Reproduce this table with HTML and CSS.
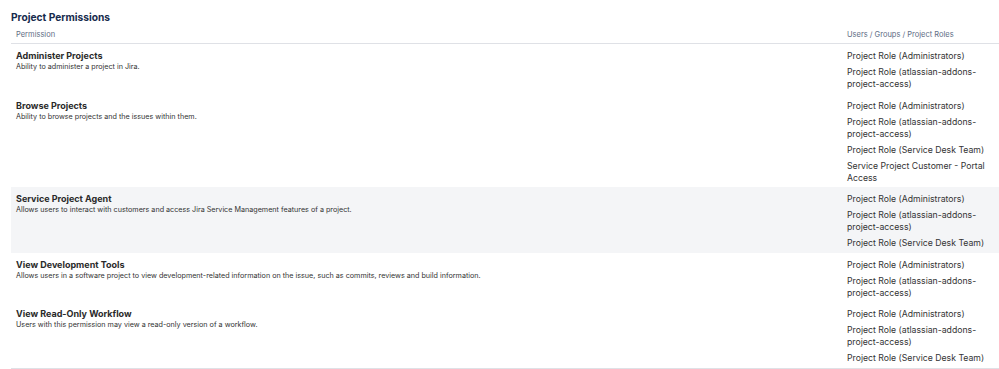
FILE: index.html
```html
<!DOCTYPE html>
<html>
<head>
<meta charset="utf-8">
<link rel="stylesheet" href="styles.css">
</head>
<body>
<div class="page">
  <h2 class="title">Project Permissions</h2>
  <div class="perm-table">
    <div class="row head">
      <div class="cell">Permission</div>
      <div class="cell">Users / Groups / Project Roles</div>
    </div>
    <div class="row">
      <div class="cell">
        <div class="name">Administer Projects</div>
        <div class="desc">Ability to administer a project in Jira.</div>
      </div>
      <div class="cell">
        <div class="item">Project Role (Administrators)</div>
        <div class="item">Project Role (atlassian-addons-project-access)</div>
      </div>
    </div>
    <div class="row">
      <div class="cell">
        <div class="name">Browse Projects</div>
        <div class="desc">Ability to browse projects and the issues within them.</div>
      </div>
      <div class="cell">
        <div class="item">Project Role (Administrators)</div>
        <div class="item">Project Role (atlassian-addons-project-access)</div>
        <div class="item">Project Role (Service Desk Team)</div>
        <div class="item">Service Project Customer - Portal Access</div>
      </div>
    </div>
    <div class="row shaded">
      <div class="cell">
        <div class="name">Service Project Agent</div>
        <div class="desc">Allows users to interact with customers and access Jira Service Management features of a project.</div>
      </div>
      <div class="cell">
        <div class="item">Project Role (Administrators)</div>
        <div class="item">Project Role (atlassian-addons-project-access)</div>
        <div class="item">Project Role (Service Desk Team)</div>
      </div>
    </div>
    <div class="row">
      <div class="cell">
        <div class="name">View Development Tools</div>
        <div class="desc">Allows users in a software project to view development-related information on the issue, such as commits, reviews and build information.</div>
      </div>
      <div class="cell">
        <div class="item">Project Role (Administrators)</div>
        <div class="item">Project Role (atlassian-addons-project-access)</div>
      </div>
    </div>
    <div class="row last">
      <div class="cell">
        <div class="name">View Read-Only Workflow</div>
        <div class="desc">Users with this permission may view a read-only version of a workflow.</div>
      </div>
      <div class="cell">
        <div class="item">Project Role (Administrators)</div>
        <div class="item">Project Role (atlassian-addons-project-access)</div>
        <div class="item">Project Role (Service Desk Team)</div>
      </div>
    </div>
  </div>
</div>
</body>
</html>
```
FILE: styles.css
```css
html, body {
  margin: 0;
  padding: 0;
  background: #ffffff;
}
body {
  font-family: Inter, "Noto Sans", sans-serif;
  color: #333333;
  overflow: hidden;
}
.page {
  padding: 10px 0 0 11px;
}
.title {
  margin: 0;
  font-size: 10.2px;
  line-height: 14px;
  font-weight: 700;
  color: #172B4D;
}
.perm-table {
  margin-top: 3px;
  width: 988px;
}
.row {
  display: grid;
  grid-template-columns: 1fr 157px;
}
.row .cell {
  padding: 6px 5px 3.5px 5px;
}
.head {
  border-bottom: 1px solid #DFE1E6;
}
.head .cell {
  padding: 2px 5px 2px 5px;
  font-size: 7.5px;
  line-height: 12px;
  color: #5E6C84;
}
.shaded {
  background: #F4F5F7;
}
.last {
  border-bottom: 1px solid #DFE1E6;
}
.name {
  font-size: 9px;
  line-height: 12px;
  font-weight: 700;
  color: #2a2a2a;
}
.desc {
  font-size: 7.2px;
  line-height: 10px;
  color: #333333;
}
.item {
  font-size: 8.7px;
  line-height: 12px;
  color: #333333;
  margin-bottom: 4px;
}
.item:last-child {
  margin-bottom: 0;
}
```
